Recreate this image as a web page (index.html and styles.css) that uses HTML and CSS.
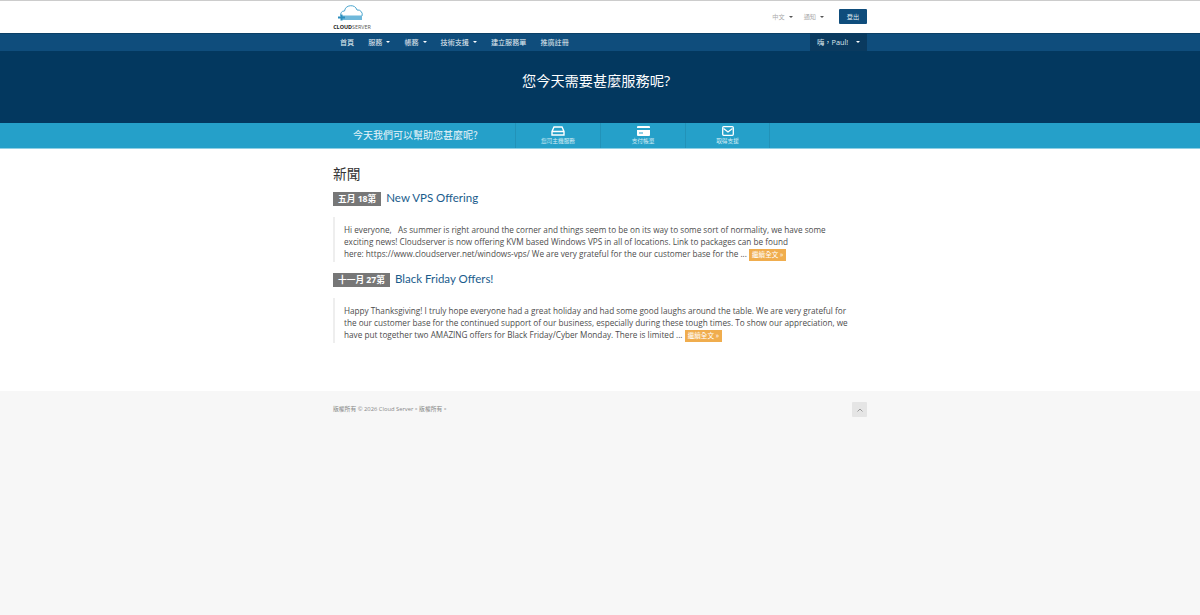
FILE: index.html
```html
<!DOCTYPE html>
<html lang="zh-Hant">
<head>
    <meta charset="UTF-8">
    <title>Cloud Server</title>
    <link rel="stylesheet" href="styles.css">
</head>
<body>
    <!-- Logo and top links -->
    <header class="top">
        <div class="container top-inner">
            <a class="logo">
                <svg width="38" height="19" viewBox="0 0 38 19">
                    <path d="M8 11a3.500 3.500 0 0 1 3.500-5 6.500 6.500 0 0 1 12.500-1 4.500 4.500 0 0 1 5 6" fill="none" stroke="#4ba6cf" stroke-width="1"/>
                    <rect x="9" y="10.500" width="20" height="4.500" fill="#6fb8da"/>
                    <rect x="5" y="11.500" width="7" height="2" fill="#2b8dbd"/>
                    <rect x="7.500" y="9.500" width="2" height="6" fill="#2b8dbd"/>
                </svg>
                <span class="logo-text"><b>CLOUD</b>SERVER</span>
            </a>
            <div class="top-links">
                <span class="top-link">中文<i class="caret dark"></i></span>
                <span class="top-link">通知<i class="caret dark"></i></span>
                <span class="logout">登出</span>
            </div>
        </div>
    </header>

    <nav class="nav">
        <div class="container nav-inner">
            <ul class="menu">
                <li>首頁</li>
                <li>服務<i class="caret"></i></li>
                <li>帳務<i class="caret"></i></li>
                <li>技術支援<i class="caret"></i></li>
                <li>建立服務單</li>
                <li>推廣註冊</li>
            </ul>
            <div class="user">嗨，Paul!<i class="caret"></i></div>
        </div>
    </nav>

    <section class="hero">
        <h1>您今天需要甚麼服務呢?</h1>
    </section>

    <section class="shortcuts">
        <div class="container shortcuts-inner">
            <div class="shortcuts-title">今天我們可以幫助您甚麼呢?</div>
            <a class="shortcut">
                <svg width="14" height="10" viewBox="0 0 14 10">
                    <path d="M3 1h8l2 4.500V9H1V5.500z M1.500 5.500h11" fill="none" stroke="#fff" stroke-width="1.400"/>
                </svg>
                <span>您司主機服務</span>
            </a>
            <a class="shortcut">
                <svg width="13" height="10" viewBox="0 0 13 10">
                    <rect width="13" height="10" rx="1" fill="#fff"/>
                    <rect y="2" width="13" height="2" fill="#25a0c9"/>
                    <rect x="2" y="6.500" width="4" height="1" fill="#25a0c9"/>
                </svg>
                <span>支付帳單</span>
            </a>
            <a class="shortcut">
                <svg width="12" height="10" viewBox="0 0 12 10">
                    <rect x=".7" y=".7" width="10.600" height="8.600" rx="1" fill="none" stroke="#fff" stroke-width="1.300"/>
                    <path d="M1.500 2.500 6 6l4.500-3.500" fill="none" stroke="#fff" stroke-width="1.300"/>
                </svg>
                <span>取得支援</span>
            </a>
        </div>
    </section>

    <main class="container content">
        <h2>新聞</h2>

        <article class="post">
            <div class="post-head">
                <span class="date">五月 18第</span>
                <a class="post-title">New VPS Offering</a>
            </div>
            <blockquote>
                Hi everyone, &nbsp; As summer is right around the corner and things seem to be on its way to some sort of normality, we have some<br>
                exciting news! Cloudserver is now offering KVM based Windows VPS in all of locations. Link to packages can be found<br>
                here: https://www.cloudserver.net/windows-vps/ We are very grateful for the our customer base for the ... <a class="more">繼續全文 »</a>
            </blockquote>
        </article>

        <article class="post">
            <div class="post-head">
                <span class="date">十一月 27第</span>
                <a class="post-title">Black Friday Offers!</a>
            </div>
            <blockquote>
                Happy Thanksgiving! I truly hope everyone had a great holiday and had some good laughs around the table. We are very grateful for<br>
                the our customer base for the continued support of our business, especially during these tough times. To show our appreciation, we<br>
                have put together two AMAZING offers for Black Friday/Cyber Monday. There is limited ... <a class="more">繼續全文 »</a>
            </blockquote>
        </article>
    </main>

    <footer class="footer">
        <div class="container footer-inner">
            <p>版權所有 © 2026 Cloud Server。版權所有。</p>
            <a class="to-top">
                <svg width="6" height="4" viewBox="0 0 6 4">
                    <path d="M.5 3.500 3 1l2.500 2.500" fill="none" stroke="#999" stroke-width="1"/>
                </svg>
            </a>
        </div>
    </footer>
</body>
</html>
```

FILE: styles.css
```css
* {
    box-sizing: border-box;
}

html, body {
    height: 100%;
}

body {
    display: flex;
    flex-direction: column;
    margin: 0;
    background: #fff;
    color: #4d4d4d;
    font-family: 'Open Sans', 'Noto Sans CJK TC', sans-serif;
    font-size: 8.2px;
}

.container {
    width: 534px;
    margin: 0 auto;
}

/* Header */
.top {
    height: 34px;
    border-top: 1px solid #ccc;
    border-bottom: 1px solid #0b3f66;
}

.top-inner {
    display: flex;
    justify-content: space-between;
    align-items: center;
    height: 100%;
}

.logo {
    display: flex;
    flex-direction: column;
    align-items: center;
    width: 38px;
    padding-top: 2px;
}

.logo svg {
    display: block;
}

.logo-text {
    font-size: 5.4px;
    line-height: 7px;
    color: #555;
    white-space: nowrap;
}

.logo-text b {
    color: #222;
}

.top-links {
    display: flex;
    align-items: center;
    gap: 11px;
    font-size: 6.2px;
    color: #aaa;
}

.top-link {
    display: flex;
    align-items: center;
    padding-bottom: 1px;
}

.logout {
    width: 28px;
    height: 15px;
    margin: 0 0 1px 4px;
    background: #0f4d7c;
    border-radius: 1px;
    color: #dfe9f0;
    line-height: 15px;
    text-align: center;
}

.caret {
    display: inline-block;
    width: 0;
    height: 0;
    margin-left: 4px;
    border-top: 2px solid #fff;
    border-left: 2px solid transparent;
    border-right: 2px solid transparent;
}

.caret.dark {
    border-top-color: #555;
}

/* Nav */
.nav {
    height: 17px;
    background: #0f4d7c;
}

.nav-inner {
    display: flex;
    justify-content: space-between;
    height: 100%;
}

.menu {
    display: flex;
    align-items: center;
    gap: 14px;
    margin: 0;
    padding: 0 0 2px 7px;
    list-style: none;
    color: #e4edf3;
    font-size: 7.1px;
}

.menu li {
    display: flex;
    align-items: center;
}

.user {
    display: flex;
    align-items: center;
    justify-content: space-between;
    width: 57px;
    margin-top: -1px;
    padding: 0 7px;
    background: #0a3a5f;
    color: #dfe9f0;
    font-size: 7.3px;
}

/* Hero */
.hero {
    height: 72px;
    background: #03385f;
}

.hero h1 {
    margin: 0;
    padding: 20px 8px 0 0;
    color: #fff;
    font-size: 14.2px;
    font-weight: 400;
    line-height: 20px;
    text-align: center;
}

/* Shortcuts */
.shortcuts {
    height: 26px;
    background: #25a0c9;
    border-bottom: 1px solid #8fcfe4;
}

.shortcuts-inner {
    display: flex;
    height: 100%;
}

.shortcuts-title {
    width: 182px;
    padding-left: 20px;
    color: #e8f5fa;
    font-family: 'Noto Sans CJK TC', sans-serif;
    font-size: 10px;
    line-height: 23px;
}

.shortcut {
    display: flex;
    flex-direction: column;
    align-items: center;
    width: 85px;
    padding-top: 3px;
    border-left: 1px solid #2292b8;
    color: #d5edf5;
    font-size: 5.7px;
    line-height: 8px;
}

.shortcut:last-child {
    border-right: 1px solid #2292b8;
}

.shortcut svg {
    display: block;
    margin-bottom: 1px;
}

/* News */
.content {
    height: 242px;
    padding-top: 15px;
}

h2 {
    margin: 0 0 7px;
    color: #333;
    font-size: 13.7px;
    font-weight: 400;
    line-height: 20px;
}

.post {
    margin-bottom: 10px;
}

.post-head {
    display: flex;
    align-items: center;
    gap: 5px;
    height: 15px;
}

.date {
    padding: 0 5px;
    background: #777;
    color: #fff;
    font-size: 8.7px;
    font-weight: 700;
    line-height: 14px;
    white-space: nowrap;
}

.post-title {
    margin-top: -3px;
    color: #1a5c8c;
    font-family: Lato, sans-serif;
    font-size: 11.5px;
}

blockquote {
    height: 45px;
    margin: 11px 0 0;
    padding: 7px 0 2px 9px;
    border-left: 2px solid #eee;
    line-height: 12px;
}

.more {
    display: inline-block;
    padding: 0 3px;
    background: #f0ad4e;
    color: #fff;
    font-size: 6.6px;
    line-height: 12px;
    vertical-align: middle;
}

/* Footer */
.footer {
    flex: 1;
    background: #f7f7f7;
}

.footer-inner {
    display: flex;
    justify-content: space-between;
    align-items: center;
    padding-top: 11px;
}

.footer p {
    margin: 0 0 2px;
    color: #888;
    font-size: 5.8px;
}

.to-top {
    display: flex;
    align-items: center;
    justify-content: center;
    width: 15px;
    height: 15px;
    background: #e5e5e5;
    border-radius: 1px;
}
```
